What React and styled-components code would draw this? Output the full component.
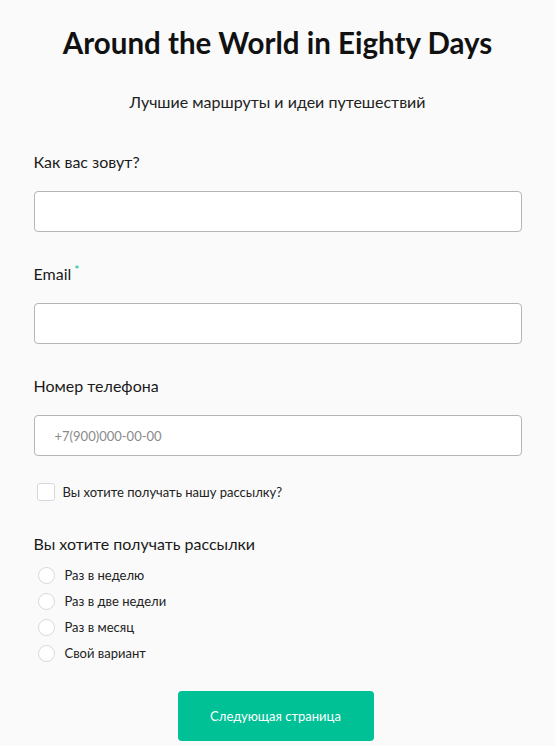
import styled, { createGlobalStyle } from "styled-components";

const GlobalStyle = createGlobalStyle`
body {
  margin: 0;
  background-color: #fafafa;
  font-family: "Lato", "Noto Sans", sans-serif;
  color: #1a1a1a;
}
* { box-sizing: border-box; }
`

const Form = styled.form`
width: 488px;
margin: 0 auto;
padding-top: 25px;
display: flex;
flex-direction: column;
`

const Title = styled.h1`
margin: 0;
text-align: center;
font-size: 29.5px;
font-weight: 700;
color: #111;
line-height: 36px;
`

const Subtitle = styled.p`
margin: 30px 0 0;
text-align: center;
font-size: 16px;
line-height: 22px;
color: #222;
`

const Field = styled.div`
display: flex;
flex-direction: column;
margin-top: ${props => props.top || 31}px;
`

const Label = styled.label`
font-size: 16px;
line-height: 22px;
color: #1a1a1a;
sup {
  color: #00c096;
  font-size: 12px;
  line-height: 0;
  margin-left: 3px;
}
`

const Input = styled.input`
margin-top: 18px;
height: 41px;
width: 100%;
border: 1px solid #b5b5b5;
border-radius: 4px;
background: #fff;
padding: 0 20px;
font-family: inherit;
font-size: 13px;
&::placeholder { color: #8a8a8a; }
`

const CheckRow = styled.label`
display: flex;
align-items: center;
gap: 8px;
margin-top: 27px;
padding-left: 3px;
font-size: 13px;
color: #222;
`

const Box = styled.span`
width: 18px;
height: 18px;
border: 1px solid #d8d8d8;
border-radius: 3px;
background: #fff;
`

const GroupTitle = styled.div`
margin-top: 32px;
font-size: 16px;
line-height: 22px;
color: #1a1a1a;
`

const RadioList = styled.div`
display: flex;
flex-direction: column;
gap: 9px;
margin-top: 12px;
padding-left: 4px;
`

const RadioRow = styled.label`
display: flex;
align-items: center;
gap: 10px;
font-size: 13px;
line-height: 17px;
color: #222;
`

const Circle = styled.span`
width: 17px;
height: 17px;
border: 1px solid #d8d8d8;
border-radius: 50%;
background: #fff;
`

const Button = styled.button`
align-self: center;
margin: 29px 4px 0 0;
width: 196px;
height: 50px;
border: none;
border-radius: 4px;
background: #00c096;
color: #fff;
font-family: inherit;
font-size: 13px;
`

const options = ["Раз в неделю", "Раз в две недели", "Раз в месяц", "Свой вариант"];

export default function App() {
  return (
    <>
      <GlobalStyle />
      <Form onSubmit={e => e.preventDefault()}>
        <Title>Around the World in Eighty Days</Title>
        <Subtitle>Лучшие маршруты и идеи путешествий</Subtitle>
        <Field top={38}>
          <Label>Как вас зовут?</Label>
          <Input type="text" />
        </Field>
        <Field>
          <Label>Email<sup>*</sup></Label>
          <Input type="email" />
        </Field>
        <Field>
          <Label>Номер телефона</Label>
          <Input type="tel" placeholder="+7(900)000-00-00" />
        </Field>
        <CheckRow>
          <Box />
          Вы хотите получать нашу рассылку?
        </CheckRow>
        <GroupTitle>Вы хотите получать рассылки</GroupTitle>
        <RadioList>
          {options.map(o => (
            <RadioRow key={o}>
              <Circle />
              {o}
            </RadioRow>
          ))}
        </RadioList>
        <Button type="submit">Следующая страница</Button>
      </Form>
    </>
  );
}
